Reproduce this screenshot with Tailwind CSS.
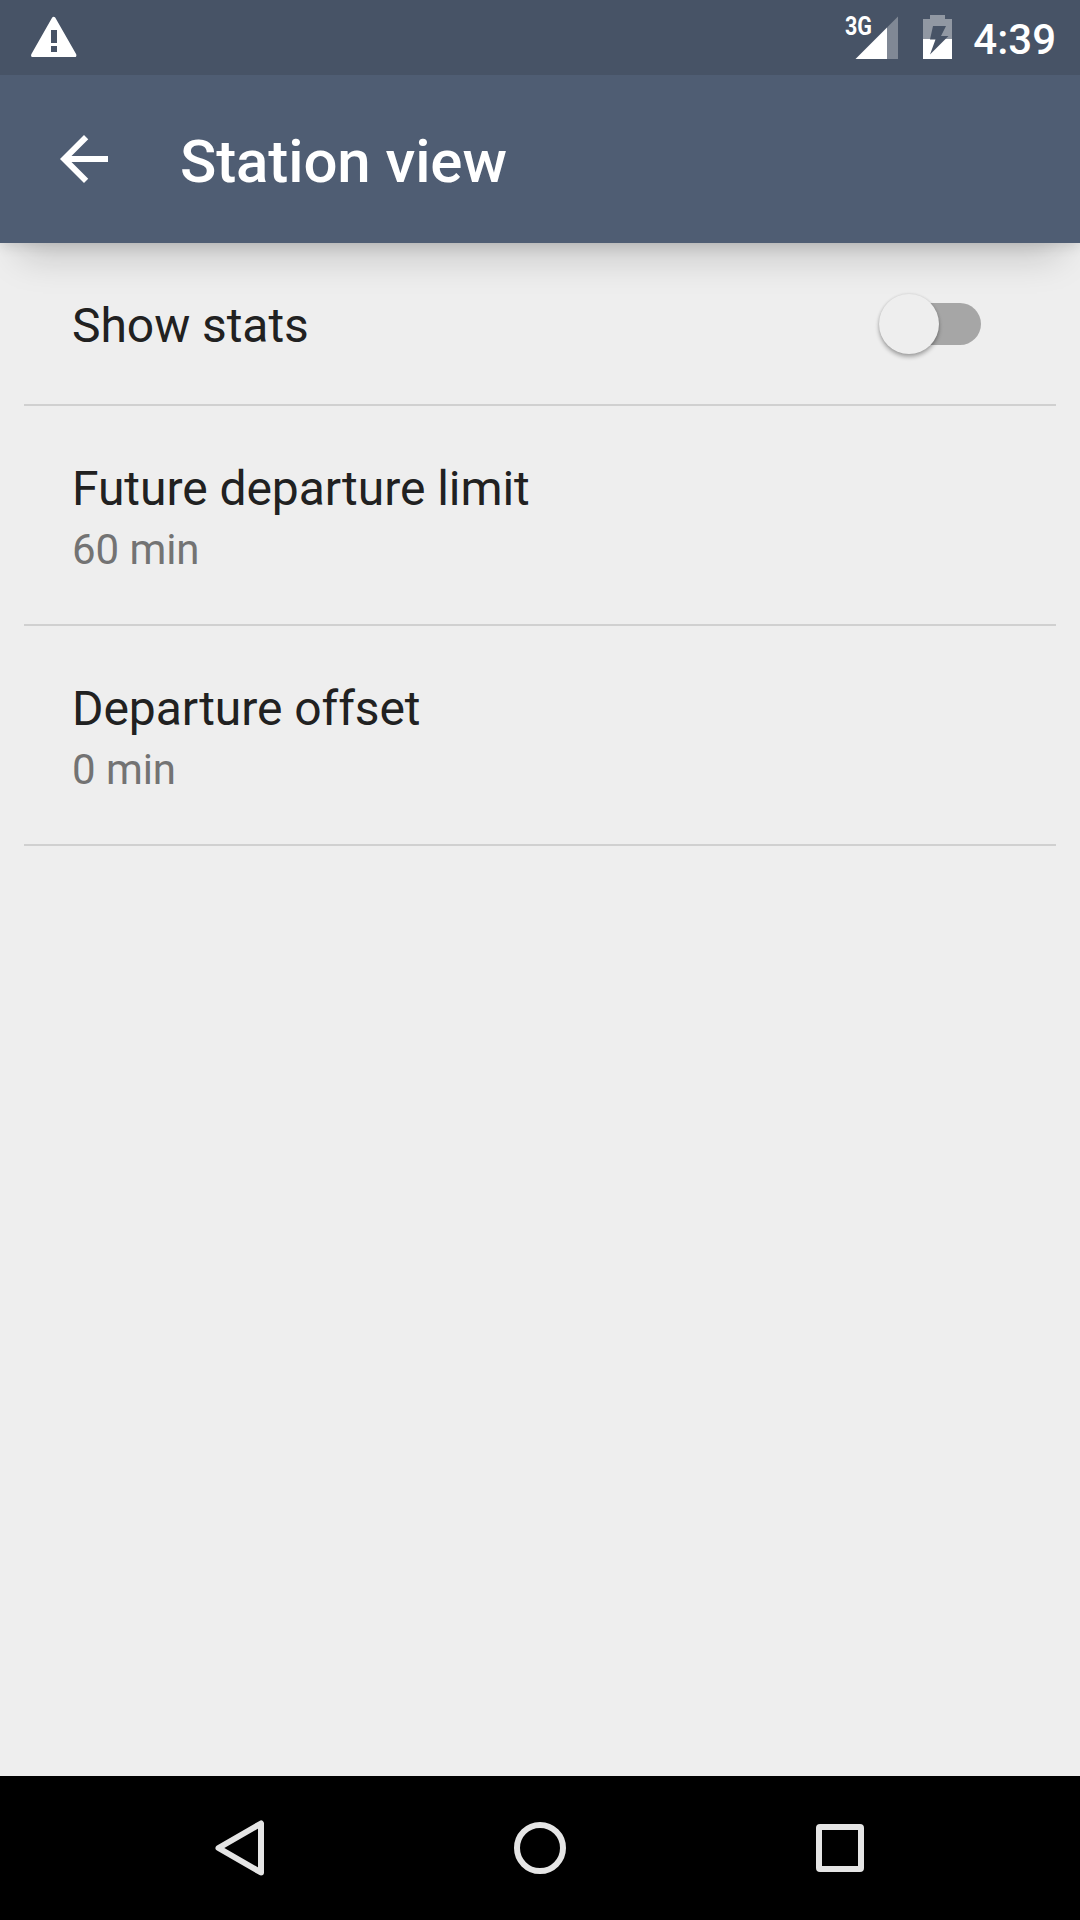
<!DOCTYPE html>
<html lang="en">
<head>
<meta charset="utf-8">
<title>Station view</title>
<script src="https://cdn.jsdelivr.net/npm/@tailwindcss/browser@4"></script>
</head>
<body class="bg-[#eeeeee] font-[Roboto,sans-serif]">
<div class="flex h-[1920px] w-[1080px] flex-col overflow-hidden">
  <div class="relative z-10">
    <!-- status bar -->
    <div class="flex h-[75px] items-start justify-between bg-[#475366] text-white">
      <svg class="ml-[30px] h-[75px] w-12" viewBox="30 0 48 75"><path fill="#fff" fill-rule="evenodd" d="M52.2 17.6Q53.7 16 55.2 17.6L76.2 54.2Q77 57 74.8 57H32.8Q30.4 57 31.3 54.2ZM51 30V43H57V30ZM51 46V52H57V46Z"/></svg>
      <div class="flex pr-6">
        <svg class="h-[75px] w-[130px]" viewBox="842 0 130 75">
          <text x="845" y="35.3" font-size="25" font-weight="700" textLength="27" lengthAdjust="spacingAndGlyphs" fill="#fff">3G</text>
          <path d="M887 27.5L898 16.5V59H887Z" fill="#808895"/>
          <path d="M855.5 59L887 27.5V59Z" fill="#fff"/>
          <path d="M923 39V19H930V15H945V19H952V39Z" fill="#9198a3"/>
          <path d="M923 39H952V59H923Z" fill="#fff"/>
          <path d="M933 26H946L941 36H948.5L930 54.5L935.5 39.5H930Z" fill="#475366"/>
        </svg>
        <span class="mt-[15px] w-[84px] text-right text-[42px] leading-[50px] font-medium">4:39</span>
      </div>
    </div>
    <!-- app bar -->
    <div class="relative flex h-[168px] items-center bg-[#4f5d73] text-white">
      <svg class="ml-12 h-[72px] w-[72px]" viewBox="0 0 24 24"><path fill="#fff" d="M20 11H7.83l5.59-5.59L12 4l-8 8 8 8 1.41-1.41L7.83 13H20v-2z"/></svg>
      <h1 class="mt-[5px] ml-[60px] text-[60px] leading-[72px] font-medium tracking-[-0.1px]">Station view</h1>
    </div>
    <div class="absolute inset-x-6 top-10 bottom-0 -z-10 shadow-[0_9px_36px_4px_rgba(0,0,0,0.18)]"></div>
    <div class="absolute inset-x-0 top-10 bottom-0 -z-10 shadow-[0_3px_12px_rgba(0,0,0,0.12)]"></div>
  </div>

  <main class="flex flex-1 flex-col px-6 tracking-[-0.06px]">
    <div class="flex h-[163px] items-center justify-between border-b-2 border-[#d0d0d0] px-12 text-[#212121]">
      <span class="pt-[5px] text-5xl leading-[56px]">Show stats</span>
      <div class="mr-[27px] flex h-[42px] w-[90px] items-center rounded-full bg-[#a6a6a6]">
        <div class="-ml-3 h-[60px] w-[60px] shrink-0 rounded-full bg-[#eeeeee] shadow-[0_3px_4px_rgba(0,0,0,0.3),0_0_3px_rgba(0,0,0,0.12)]"></div>
      </div>
    </div>
    <div class="flex h-[220px] flex-col border-b-2 border-[#d0d0d0] px-12 pt-[55px]">
      <span class="text-5xl leading-[56px] text-[#212121]">Future departure limit</span>
      <span class="mt-2 text-[42px] leading-[50px] text-[#737373]">60 min</span>
    </div>
    <div class="flex h-[220px] flex-col border-b-2 border-[#d0d0d0] px-12 pt-[55px]">
      <span class="text-5xl leading-[56px] text-[#212121]">Departure offset</span>
      <span class="mt-2 text-[42px] leading-[50px] text-[#737373]">0 min</span>
    </div>
  </main>

  <!-- navigation bar -->
  <nav class="flex h-36 items-center justify-center gap-[240px] bg-black">
    <svg class="h-[60px] w-[60px]" viewBox="0 0 60 60" fill="none" stroke="#e5e5e5" stroke-width="6" stroke-linejoin="round"><path d="M8.5 30L51 5.5V54.5Z"/></svg>
    <svg class="h-[60px] w-[60px]" viewBox="0 0 60 60" fill="none" stroke="#e5e5e5" stroke-width="6"><circle cx="30" cy="30" r="23"/></svg>
    <svg class="h-[60px] w-[60px]" viewBox="0 0 60 60" fill="none" stroke="#e5e5e5" stroke-width="6" stroke-linejoin="round"><rect x="9" y="9" width="42" height="42" rx="1"/></svg>
  </nav>
</div>
</body>
</html>
